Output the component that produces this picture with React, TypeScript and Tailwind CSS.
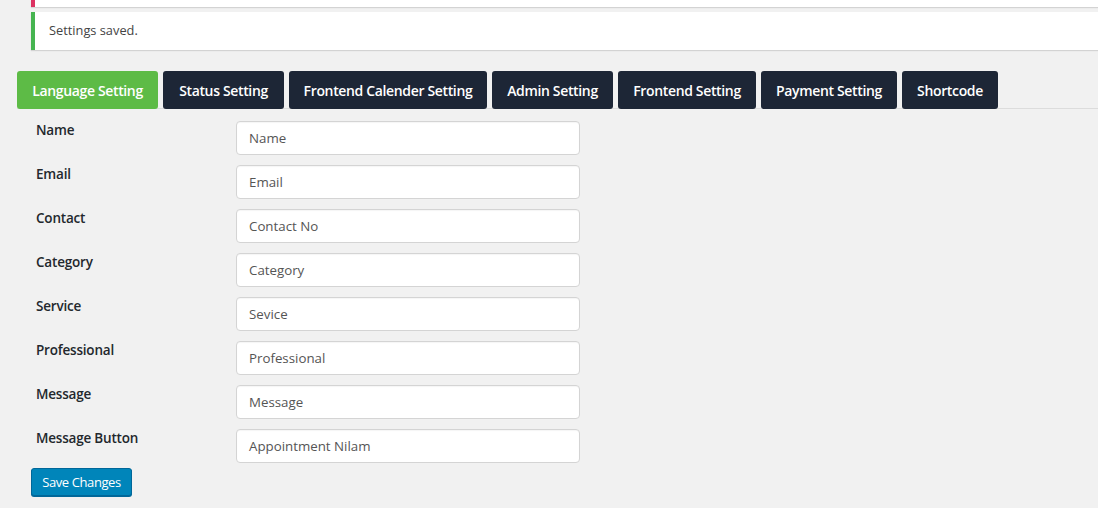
import React from 'react';

const tabs = [
    { label: 'Language Setting', w: 'w-[141px]', active: true },
    { label: 'Status Setting', w: 'w-[121px]' },
    { label: 'Frontend Calender Setting', w: 'w-[198px]' },
    { label: 'Admin Setting', w: 'w-[121px]' },
    { label: 'Frontend Setting', w: 'w-[138px]' },
    { label: 'Payment Setting', w: 'w-[136px]' },
    { label: 'Shortcode', w: 'w-[96px]' },
];

const fields = [
    { label: 'Name', value: 'Name' },
    { label: 'Email', value: 'Email' },
    { label: 'Contact', value: 'Contact No' },
    { label: 'Category', value: 'Category' },
    { label: 'Service', value: 'Sevice' },
    { label: 'Professional', value: 'Professional' },
    { label: 'Message', value: 'Message' },
    { label: 'Message Button', value: 'Appointment Nilam' },
];

const App: React.FC = () => {
    return (
        <div className="min-h-screen bg-[#f1f1f1] text-[#23282d] font-['Open_Sans','Noto_Sans',sans-serif]">
            {/* Notices */}
            <div className="ml-[31px] h-[7px] bg-white border-l-4 border-[#dc3262] shadow-[0_1px_1px_rgba(0,0,0,0.12)]"></div>
            <div className="ml-[31px] mt-[5px] h-[38px] flex items-center bg-white border-l-4 border-[#46b450] pl-[14px] shadow-[0_1px_1px_rgba(0,0,0,0.12)]">
                <span className="text-[12.8px] text-[#444]">Settings saved.</span>
            </div>

            {/* Tabs */}
            <div className="ml-[17px] mt-[21px] flex gap-[5px] border-b border-[#dcdcdc] h-[38px]">
                {tabs.map(t => (
                    <div
                        key={t.label}
                        className={`${t.w} h-[38px] flex items-center justify-center rounded-[3px] text-[14px] font-semibold tracking-[-0.35px] text-white ${t.active ? 'bg-[#5dbb46]' : 'bg-[#1d2636]'}`}
                    >
                        {t.label}
                    </div>
                ))}
            </div>

            {/* Form */}
            <div className="mt-[12px] flex flex-col gap-[10px]">
                {fields.map(f => (
                    <div key={f.label} className="flex items-start h-[34px]">
                        <div className="w-[236px] pl-[36px] text-[13.5px] leading-[18px] font-semibold text-[#23282d] tracking-[-0.2px]">
                            {f.label}
                        </div>
                        <div className="w-[344px] h-[34px] bg-white border border-[#d4d4d4] rounded-[4px] flex items-center px-[12px] pt-[1px] text-[13.3px] text-[#555] shadow-[inset_0_1px_1px_rgba(0,0,0,0.04)]">
                            {f.value}
                        </div>
                    </div>
                ))}
            </div>

            <div className="ml-[31px] mt-[5px]">
                <button className="w-[101px] h-[28px] pt-[2px] bg-[#0085ba] border border-[#006799] rounded-[3px] text-white text-[13px] tracking-[-0.4px] shadow-[0_1px_0_#006799]">
                    Save Changes
                </button>
            </div>
        </div>
    );
};

export default App;
